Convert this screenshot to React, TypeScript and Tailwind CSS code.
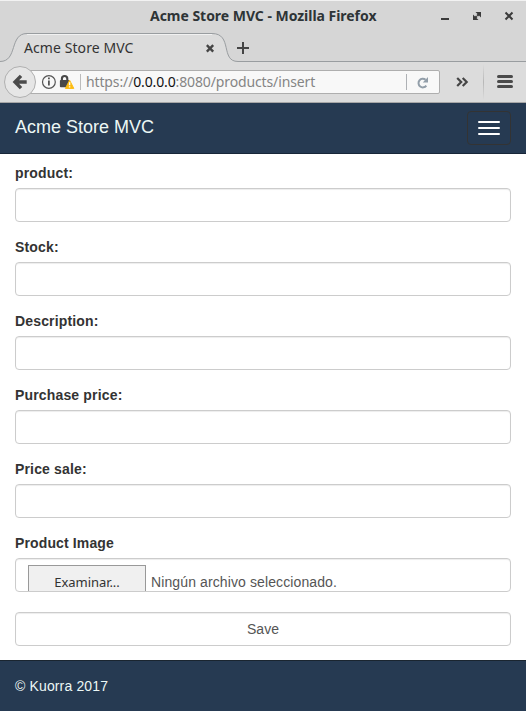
import React from 'react';

const chromeFont = 'font-["Noto_Sans","Open_Sans",sans-serif]';
const inputBox =
  'block h-[34px] w-full rounded-[4px] border border-[#ccc] bg-white shadow-[inset_0_1px_1px_rgba(0,0,0,0.075)] outline-none';

function TitleBar() {
  return (
    <div className="relative flex h-[33px] items-center justify-end border-t border-[#f2f2f2] bg-[#d6d6d6]">
      <span className="absolute top-[4px] left-[150px] text-[14px] leading-[22px] font-bold tracking-[-0.03px] whitespace-nowrap text-[#2e3436]">
        Acme Store MVC - Mozilla Firefox
      </span>
      <svg className="mr-[12px] h-[12px] w-[74px]" viewBox="0 0 74 12" fill="none">
        <path d="M1 8h8" stroke="#3b3b3b" strokeWidth="2" />
        <path d="M35.5 1H41v5.5L39 4.5 38 5.5 36.5 4l1-1zM33 3.5l2 2 1-1L37.5 6l-1 1 2 2H33z" fill="#3b3b3b" />
        <path d="m65.5 1.5 7 7m0-7-7 7" stroke="#3b3b3b" strokeWidth="2" />
      </svg>
    </div>
  );
}

function TabStrip() {
  return (
    <div className="relative flex h-[29px] items-center bg-[#d6d6d6]">
      <svg className="absolute inset-0 h-[30px] w-[526px]" viewBox="0 0 526 30">
        <path d="M0 28.5C18 28.5 9 .5 27 .5H212C233 .5 220 28.5 238 28.5H526V30H0Z" fill="#dcdcdc" />
        <path d="M0 29.5h5M27 1.5h185M237 29.5h289" stroke="#f1f1f1" fill="none" />
        <path d="M0 28.5C18 28.5 9 .5 27 .5H212C233 .5 220 28.5 238 28.5H526" fill="none" stroke="#999da0" />
      </svg>
      <span className="relative ml-[24px] w-[182px] text-[14px] leading-[20px] tracking-[0.08px] text-[#333]">
        Acme Store MVC
      </span>
      <svg className="relative h-[14px] w-[46px]" viewBox="0 0 46 14" fill="none" stroke="#454545">
        <path d="m.8 4.2 6.4 6.4m0-6.4-6.4 6.4" strokeWidth="2.4" />
        <path d="M31 7h12M37 1v12" strokeWidth="2" />
      </svg>
    </div>
  );
}

function Toolbar() {
  return (
    <div className="relative flex h-[41px] items-center border-b border-[#a7a7a7] bg-[#dcdcdc]">
      <div className="z-10 ml-[4px] flex h-[32px] w-[32px] shrink-0 items-center justify-center rounded-full border border-[#b0b0b0] bg-[#e6e6e6]">
        <svg width="16" height="16" viewBox="0 0 16 16" fill="none" stroke="#4b4b4b" strokeWidth="3.4">
          <path d="M9 1.9 3 8l6 6.1M3.5 8h11.2" />
        </svg>
      </div>
      <div className="-ml-[8px] flex h-[24px] w-[412px] items-center rounded-r-[2px] border border-[#aeaeae] bg-[#f8f8f8]">
        <svg className="ml-[12px] shrink-0" width="34" height="18" viewBox="0 0 34 18" fill="none">
          <circle cx="7.9" cy="9" r="6.4" stroke="#555" strokeWidth="1.2" />
          <path d="M7.9 7.5v5M7.9 4.6v1.7" stroke="#555" strokeWidth="1.8" />
          <path d="M20.9 8V5.7a2.7 2.7 0 0 1 5.4 0V8" stroke="#484848" strokeWidth="2.1" />
          <rect x="18.9" y="7" width="9.2" height="7.3" rx="1" fill="#484848" />
          <path d="M28.6 7.2 32.8 15.4h-8.4Z" fill="#fdbc12" stroke="#fdbc12" strokeWidth="1" strokeLinejoin="round" />
          <path d="M28.6 9.3v3M28.6 13.2v1.4" stroke="#fff" strokeWidth="1.4" />
        </svg>
        <span className="ml-[5px] h-[16px] w-px shrink-0 bg-[#bcbcbc]" />
        <span className="ml-[5px] w-[320px] text-[14px] leading-[20px] tracking-[-0.13px] whitespace-nowrap text-[#858585]">
          https://<span className="text-[#111]">0.0.0.0</span>:8080/products/insert
        </span>
        <span className="h-[16px] w-px shrink-0 bg-[#aeb1b5]" />
        <svg className="ml-[10px] shrink-0" width="12" height="13" viewBox="0 0 12 13">
          <path d="M9.3 9.6A4.3 4.3 0 1 1 8.6 3.8" fill="none" stroke="#929ea9" strokeWidth="2" />
          <path d="M11 1v5.4H5.8Z" fill="#929ea9" />
        </svg>
      </div>
      <svg className="ml-[16px] shrink-0" width="13" height="10" viewBox="0 0 13 10" fill="none" stroke="#454545" strokeWidth="2.2">
        <path d="m1.2 1 4 4-4 4M6.7 1l4 4-4 4" />
      </svg>
      <span className="ml-[14px] h-[36px] w-px bg-gradient-to-b from-transparent via-[#b7b7b7] to-transparent" />
      <div className="ml-[13px] flex w-[16px] -translate-y-px flex-col gap-[2px]">
        <i className="h-[3px] rounded-full bg-[#4a4a4a]" />
        <i className="h-[3px] rounded-full bg-[#4a4a4a]" />
        <i className="h-[3px] rounded-full bg-[#4a4a4a]" />
      </div>
    </div>
  );
}

function Field({ label }: { label: string }) {
  return (
    <label className="mb-[15px] block">
      <span className="mb-[5px] block font-bold tracking-[0.16px]">{label}</span>
      <input className={inputBox} />
    </label>
  );
}

export default function App() {
  return (
    <div className="flex h-[711px] w-[526px] flex-col overflow-hidden bg-white">
      <header className={chromeFont}>
        <TitleBar />
        <TabStrip />
        <Toolbar />
      </header>
      <div className='flex flex-1 flex-col font-["Liberation_Sans",Arial,sans-serif] text-[14px] leading-[20px] text-[#333]'>
        <nav className="flex h-[51px] items-center justify-between border-b border-[#172638] bg-[#263a52] px-[15px]">
          <span className="pb-[2px] text-[18px] text-[#ecf7f5]">Acme Store MVC</span>
          <button className="flex h-[34px] w-[44px] flex-col items-center justify-center gap-[4px] rounded-[4px] border border-[#333]">
            <i className="h-[2px] w-[22px] rounded-[1px] bg-white" />
            <i className="h-[2px] w-[22px] rounded-[1px] bg-white" />
            <i className="h-[2px] w-[22px] rounded-[1px] bg-white" />
          </button>
        </nav>
        <main className="h-[506px] px-[15px] pt-[9px]">
          <Field label="product:" />
          <Field label="Stock:" />
          <Field label="Description:" />
          <Field label="Purchase price:" />
          <Field label="Price sale:" />
          <span className="mb-[5px] block font-bold tracking-[0.13px]">Product Image</span>
          <div className={inputBox + ' overflow-hidden'}>
            <div className="flex items-start pt-[6px] pl-[12px]">
              <button className={chromeFont + ' h-[34px] w-[118px] shrink-0 border border-[#999] bg-[#f0f0f0] text-[13px] tracking-[-0.05px] text-[#333]'}>
                Examinar...
              </button>
              <span className="ml-[5px] pt-[7px] tracking-[0.11px] whitespace-nowrap text-[#555]">Ningún archivo seleccionado.</span>
            </div>
          </div>
          <button className={inputBox + ' mt-[20px] text-center text-[#555]'}>Save</button>
        </main>
        <footer className="flex h-[51px] items-center border-t border-[#1a2530] bg-[#263a52] px-[15px] tracking-[0.14px] text-[#ecf7f5]">
          © Kuorra 2017
        </footer>
      </div>
    </div>
  );
}
